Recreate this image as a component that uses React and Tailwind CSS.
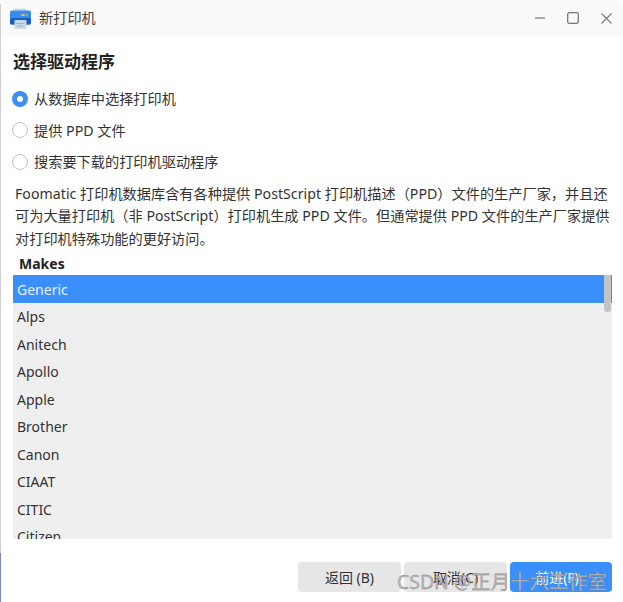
import React from "react";

const font = { fontFamily: '"Noto Sans", "Noto Sans CJK SC", sans-serif' };
const makes = ["Alps","Anitech","Apollo","Apple","Brother","Canon","CIAAT","CITIC","Citizen"];

function Radio({ checked, label }) {
  return (
    <div className="flex h-[31.5px] items-center gap-[6px] pl-[12px] text-[14.2px] text-[#333]">
      {checked ? (
        <span className="flex h-[16px] w-[16px] items-center justify-center rounded-full bg-[#3d8ef5]">
          <span className="h-[6px] w-[6px] rounded-full bg-white" />
        </span>
      ) : (
        <span className="h-[16px] w-[16px] rounded-full border border-[#c4c4c4] bg-white" />
      )}
      <span>{label}</span>
    </div>
  );
}

function PrinterIcon() {
  return (
    <svg width="21" height="21" viewBox="0 0 21 21">
      <rect x="4.5" y="0.5" width="12" height="5" rx="1" fill="#c9dbe6" />
      <path d="M2 2.5h17a2 2 0 0 1 2 2v10a2 2 0 0 1-2 2H2a2 2 0 0 1-2-2v-10a2 2 0 0 1 2-2z" fill="#3a8cf0" />
      <rect x="0" y="10" width="21" height="6.5" rx="1.5" fill="#1d5fc0" />
      <rect x="11.5" y="6" width="3" height="2" fill="#f2c14a" />
      <rect x="15" y="6" width="3" height="2" fill="#4cc38a" />
      <rect x="4.5" y="12" width="12" height="9" rx="1" fill="#c6dae4" />
      <rect x="6.5" y="15" width="8" height="1" fill="#9fb8c5" />
      <rect x="6.5" y="17.5" width="6" height="1" fill="#9fb8c5" />
    </svg>
  );
}

export default function App() {
  return (
    <div style={font} className="relative h-[602px] w-[623px] overflow-hidden bg-white">
      <div className="flex h-[36px] items-center rounded-tl-[6px] rounded-tr-[8px] bg-[#fafafa] pl-[10px] pr-[11px]">
        <PrinterIcon />
        <span className="ml-[8px] text-[14.2px] text-[#444]">新打印机</span>
        <div className="ml-auto flex items-center gap-[22px] text-[#777]">
          <svg width="10" height="12" viewBox="0 0 10 12"><path d="M0 6h10" stroke="currentColor" strokeWidth="1.2" /></svg>
          <svg width="12" height="12" viewBox="0 0 12 12"><rect x="0.7" y="0.7" width="10.6" height="10.6" rx="1.5" fill="none" stroke="currentColor" strokeWidth="1.3" /></svg>
          <svg width="11" height="11" viewBox="0 0 11 11"><path d="M0.5 0.5l10 10M10.5 0.5l-10 10" stroke="currentColor" strokeWidth="1.1" /></svg>
        </div>
      </div>

      <div className="flex h-[47px] items-center pl-[13px] pt-[4px] text-[17px] font-bold text-[#222]">选择驱动程序</div>

      <div>
        <Radio checked label="从数据库中选择打印机" />
        <Radio label="提供 PPD 文件" />
        <Radio label="搜索要下载的打印机驱动程序" />
      </div>

      <p className="ml-[15px] mt-[5px] w-[600px] text-[14.2px] leading-[22.5px] text-[#333]">
        Foomatic 打印机数据库含有各种提供 PostScript 打印机描述（PPD）文件的生产厂家，并且还可为大量打印机（非 PostScript）打印机生成 PPD 文件。但通常提供 PPD 文件的生产厂家提供对打印机特殊功能的更好访问。
      </p>

      <div className="mt-[2px] flex h-[23px] items-center pl-[19px] text-[14px] font-bold text-[#222]">Makes</div>

      <div className="relative ml-[13px] h-[264px] w-[599px] overflow-hidden bg-[#efefef] text-[14px] text-[#333]">
        <div className="flex h-[27.5px] items-center bg-[#3a8ffb] pl-[4px] pt-[1px] text-[#e6f0ff]">Generic</div>
        {makes.map((m) => (
          <div key={m} className="flex h-[27.5px] items-center pl-[4px] pt-[1px]">{m}</div>
        ))}
        <div className="absolute right-[1px] top-0 h-[37px] w-[7px] rounded-b-[3px] bg-[#c4c4c4]" />
      </div>

      <div className="mt-[23px] flex justify-end gap-[3px] pr-[11px] text-[14px] text-[#333]">
        <button className="h-[30px] w-[103px] rounded-[4px] bg-[#e6e6e6]">返回 (B)</button>
        <button className="h-[30px] w-[103px] rounded-[4px] bg-[#e6e6e6]">取消(C)</button>
        <button className="h-[30px] w-[102px] rounded-[4px] bg-[#3a8ffb] pr-[8px] text-white">前进(F)</button>
      </div>

      <div className="absolute left-0 top-[4px] h-[549px] w-[1px] bg-[#cfcfcf]" />
      <div className="absolute bottom-0 left-0 h-[49px] w-[1px] bg-[#7d88c0]" />
      <div className="absolute left-[397px] top-[568px] whitespace-nowrap text-[19.4px] leading-[27px] text-[#b8b8b8] [-webkit-text-stroke:0.3px_#808080]">
        CSDN @正月十六工作室
      </div>
    </div>
  );
}
